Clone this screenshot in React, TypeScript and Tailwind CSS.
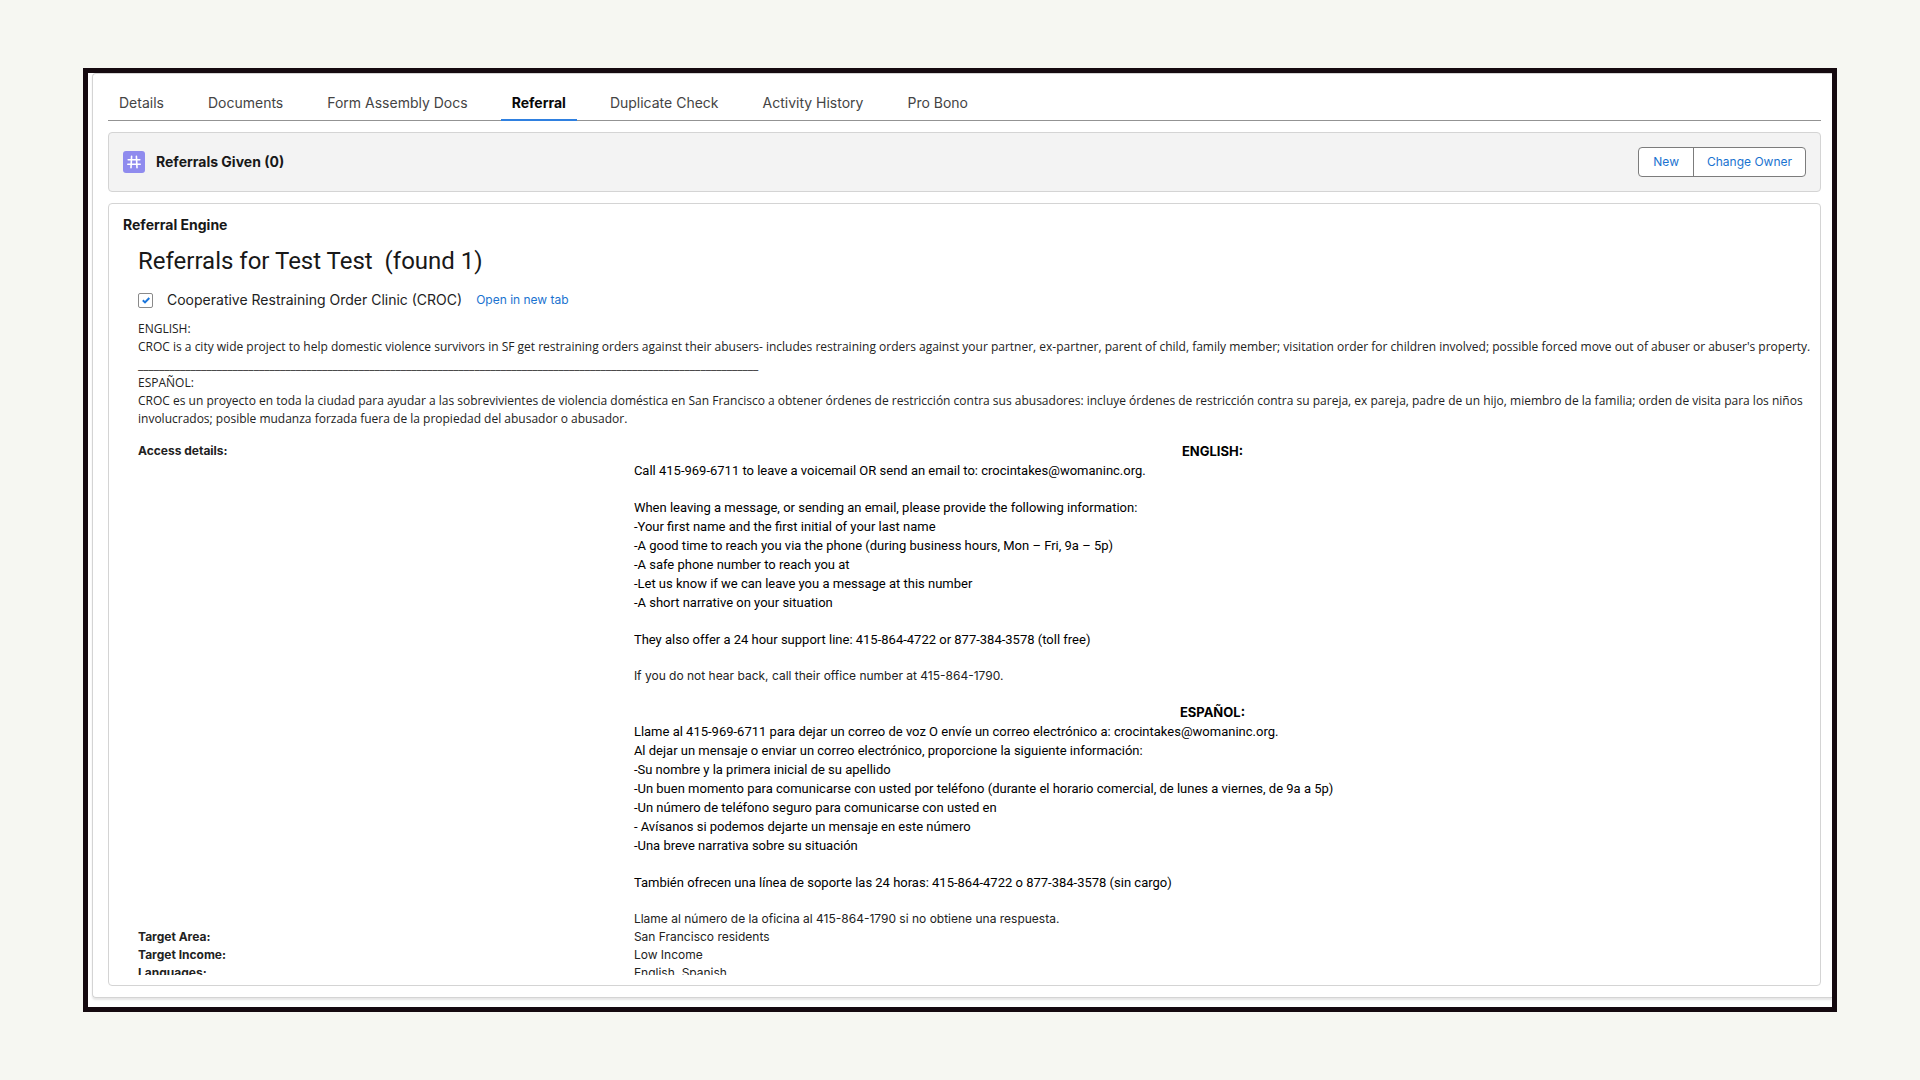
import React from "react";

const tabs = [
  "Details",
  "Documents",
  "Form Assembly Docs",
  "Referral",
  "Duplicate Check",
  "Activity History",
  "Pro Bono",
];

const accessEnglish = [
  "Call 415-969-6711 to leave a voicemail OR send an email to: crocintakes@womaninc.org.",
  "",
  "When leaving a message, or sending an email, please provide the following information:",
  "-Your first name and the first initial of your last name",
  "-A good time to reach you via the phone (during business hours, Mon – Fri, 9a – 5p)",
  "-A safe phone number to reach you at",
  "-Let us know if we can leave you a message at this number",
  "-A short narrative on your situation",
  "",
  "They also offer a 24 hour support line: 415-864-4722 or 877-384-3578 (toll free)",
];

const accessSpanish = [
  "Llame al 415-969-6711 para dejar un correo de voz O envíe un correo electrónico a: crocintakes@womaninc.org.",
  "Al dejar un mensaje o enviar un correo electrónico, proporcione la siguiente información:",
  "-Su nombre y la primera inicial de su apellido",
  "-Un buen momento para comunicarse con usted por teléfono (durante el horario comercial, de lunes a viernes, de 9a a 5p)",
  "-Un número de teléfono seguro para comunicarse con usted en",
  "- Avísanos si podemos dejarte un mensaje en este número",
  "-Una breve narrativa sobre su situación",
  "",
  "También ofrecen una línea de soporte las 24 horas: 415-864-4722 o 877-384-3578 (sin cargo)",
];

function Lines({ lines }: { lines: string[] }) {
  return (
    <>
      {lines.map((line, i) =>
        line ? (
          <p key={i} className="font-['Roboto',sans-serif] text-[13px] leading-[19px] text-black">
            {line}
          </p>
        ) : (
          <div key={i} className="h-[18px]" />
        ),
      )}
    </>
  );
}

function HashIcon() {
  return (
    <span className="flex size-[22px] items-center justify-center rounded-[3px] bg-[#8f8bee]">
      <svg viewBox="0 0 14 14" className="size-[14px]" fill="none" stroke="white" strokeWidth="1.6" strokeLinecap="round" aria-hidden="true">
        <path d="M4.6 1.2 4 12.8M9.4 1.2l.6 11.6M1.2 4.8h11.6M.8 9.2h12.4" />
      </svg>
    </span>
  );
}

function Tabs() {
  return (
    <nav className="flex border-b border-[#939393]">
      {tabs.map((tab) =>
        tab === "Referral" ? (
          <button key={tab} type="button" aria-current="page" className="-mb-px mx-[11px] border-b-2 border-[#2f80e0] px-[11px] pt-[17px] pb-[4px] text-[14px] leading-[24px] font-bold text-[#080808] first:ml-0">
            {tab}
          </button>
        ) : (
          <button key={tab} type="button" className="mx-[11px] px-[11px] pt-[17px] pb-[5px] text-[14px] leading-[24px] text-[#444] first:ml-0">
            {tab}
          </button>
        ),
      )}
    </nav>
  );
}

function ReferralsGiven() {
  return (
    <section className="mt-[11px] flex items-center justify-between rounded-[4px] border border-[#d4d4d4] bg-[#f3f3f3] px-[14px] py-[14px]">
      <div className="flex items-center gap-[11px]">
        <HashIcon />
        <h2 className="text-[14px] leading-[24px] font-bold text-[#181818]">Referrals Given (0)</h2>
      </div>
      <div className="flex h-[30px] overflow-hidden rounded-[4px] border border-[#7c7c7c] bg-white text-[12px] text-[#1a73d0]">
        <button type="button" className="border-r border-[#7c7c7c] px-[14px]">New</button>
        <button type="button" className="px-[13px]">Change Owner</button>
      </div>
    </section>
  );
}

function AccessDetails() {
  return (
    <>
      <h4 className="text-center text-[13px] leading-[19px] font-bold text-black">ENGLISH:</h4>
      <Lines lines={accessEnglish} />
      <p className="py-[18px]">If you do not hear back, call their office number at 415-864-1790.</p>
      <h4 className="text-center text-[13px] leading-[19px] font-bold text-black">ESPAÑOL:</h4>
      <Lines lines={accessSpanish} />
      <p className="pt-[18px]">Llame al número de la oficina al 415-864-1790 si no obtiene una respuesta.</p>
    </>
  );
}

function ReferralEngine() {
  return (
    <section className="mt-[11px] flex min-h-0 flex-1 flex-col rounded-[4px] border border-[#d4d4d4] pt-[9px] pb-[10px] pl-[14px]">
      <h2 className="text-[14px] leading-[24px] font-bold text-[#181818]">Referral Engine</h2>
      <div className="min-h-0 flex-1 overflow-hidden pl-[15px] text-[12px] leading-[18px] text-[#222]">
        <h1 className="mt-[8px] font-['Roboto',sans-serif] text-[24px] leading-[32px] whitespace-pre text-[#181818]">{"Referrals for Test Test  (found 1)"}</h1>
        <div className="mt-[11px] flex items-center">
          <label className="flex items-center text-[14px] leading-[24px] text-[#222]">
            <span className="mr-[14px] grid size-[15px] place-items-center">
              <input type="checkbox" defaultChecked className="peer col-start-1 row-start-1 size-[15px] appearance-none rounded-[2px] border border-[#8a8a8a] bg-white" />
              <svg viewBox="0 0 8 7" className="invisible col-start-1 row-start-1 h-[7px] w-[8px] peer-checked:visible" fill="none" stroke="#1b76dc" strokeWidth="2" aria-hidden="true">
                <path d="M.8 3.3 3 5.4 7.3 1" />
              </svg>
            </span>
            Cooperative Restraining Order Clinic (CROC)
          </label>
          <a href="#open" className="ml-[14px] text-[12px] text-[#1a73d0]">Open in new tab</a>
        </div>
        <div className="mt-[8px] mr-[6px] font-['Open_Sans',sans-serif]">
          <p>ENGLISH:</p>
          <p>CROC is a city wide project to help domestic violence survivors in SF get restraining orders against their abusers- includes restraining orders against your partner, ex-partner, parent of child, family member; visitation order for children involved; possible forced move out of abuser or abuser's property.</p>
          <p>{"_".repeat(118)}</p>
          <p>ESPAÑOL:</p>
          <p>CROC es un proyecto en toda la ciudad para ayudar a las sobrevivientes de violencia doméstica en San Francisco a obtener órdenes de restricción contra sus abusadores: incluye órdenes de restricción contra su pareja, ex pareja, padre de un hijo, miembro de la familia; orden de visita para los niños involucrados; posible mudanza forzada fuera de la propiedad del abusador o abusador.</p>
        </div>
        <dl className="mt-[14px] mr-[29px] grid grid-cols-[3fr_7fr]">
          <dt className="font-bold">Access details:</dt>
          <dd><AccessDetails /></dd>
          <dt className="font-bold">Target Area:</dt>
          <dd>San Francisco residents</dd>
          <dt className="font-bold">Target Income:</dt>
          <dd>Low Income</dd>
          <dt className="font-bold">Languages:</dt>
          <dd>English, Spanish</dd>
        </dl>
      </div>
    </section>
  );
}

export default function App() {
  return (
    <div className="h-screen bg-[#f6f7f2] px-[83px] py-[68px] font-['Inter',sans-serif]">
      <main className="flex h-full flex-col overflow-hidden border-5 border-[#150a10] bg-white pb-[9px] pl-[4px]">
        <div className="flex min-h-0 flex-1 flex-col rounded-l-[4px] border border-r-0 border-[#d4d4d4] pr-[11px] pb-[11px] pl-[15px] shadow-[0_2px_2px_rgba(0,0,0,0.1)]">
          <Tabs />
          <ReferralsGiven />
          <ReferralEngine />
        </div>
      </main>
    </div>
  );
}
